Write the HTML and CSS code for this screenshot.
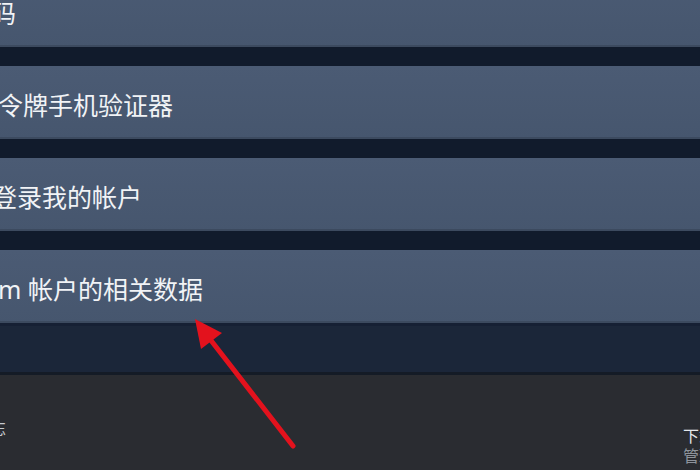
FILE: index.html
```html
<!DOCTYPE html>
<html lang="zh-CN">
<head>
<meta charset="utf-8">
<title>Steam 帮助</title>
<link rel="stylesheet" href="styles.css">
</head>
<body>
<div class="page">
  <div class="list">
    <div class="row row-first"><span class="label shift-1">码</span></div>
    <div class="row"><span class="label shift-2">令牌手机验证器</span></div>
    <div class="row"><span class="label shift-3">登录我的帐户</span></div>
    <div class="row"><span class="label shift-4">m 帐户的相关数据</span></div>
  </div>
  <div class="spacer"></div>
  <div class="footer">
    <span class="footer-left">忘</span>
    <div class="footer-right">
      <span class="footer-title">下载</span>
      <span class="footer-sub">管理</span>
    </div>
  </div>
  <svg class="arrow" width="700" height="470" viewBox="0 0 700 470">
    <line x1="206" y1="334" x2="293" y2="446" stroke="#e3121d" stroke-width="5" stroke-linecap="round"/>
    <polygon points="195,319 222,333 201,349" fill="#e3121d"/>
  </svg>
</div>
</body>
</html>
```
FILE: styles.css
```css
html, body {
  margin: 0;
  padding: 0;
}
body {
  width: 700px;
  height: 470px;
  overflow: hidden;
  background: #1b2639;
  font-family: "Noto Sans", "Noto Sans CJK SC", sans-serif;
}
.page {
  position: relative;
  width: 700px;
  height: 470px;
  display: flex;
  flex-direction: column;
  overflow: hidden;
}
.list {
  display: flex;
  flex-direction: column;
  gap: 19px;
  margin-top: -26px;
  background: #111b2c;
}
.row {
  height: 73px;
  display: flex;
  align-items: center;
  background: linear-gradient(to bottom, #4b5b74, #46566e);
  box-shadow: inset 0 -2px 0 #3c4a5f;
  color: #f1f3f6;
  font-size: 25px;
  line-height: 1;
}
.label {
  white-space: nowrap;
  padding-top: 5px;
}
.shift-1 { margin-left: -9px; }
.shift-2 { margin-left: -2px; }
.shift-3 { margin-left: -8px; }
.shift-4 { margin-left: -2px; }
.spacer {
  height: 46px;
  background: #1b2639;
  border-top: 3px solid #162034;
  border-bottom: 3px solid #141b26;
}
.footer {
  flex: 1;
  background: #2a2c31;
  display: flex;
  justify-content: space-between;
  align-items: flex-start;
  padding-top: 20px;
  font-size: 16px;
  line-height: 20px;
}
.footer-left {
  margin-left: -10px;
  margin-top: 24px;
  color: #c4c8cf;
  white-space: nowrap;
}
.footer-right {
  display: flex;
  flex-direction: column;
  margin-top: 31px;
  margin-right: -15px;
  width: 32px;
  white-space: nowrap;
}
.footer-title {
  color: #e4e7eb;
}
.footer-sub {
  color: #8d939b;
}
.arrow {
  position: absolute;
  left: 0;
  top: 0;
  pointer-events: none;
}
```
